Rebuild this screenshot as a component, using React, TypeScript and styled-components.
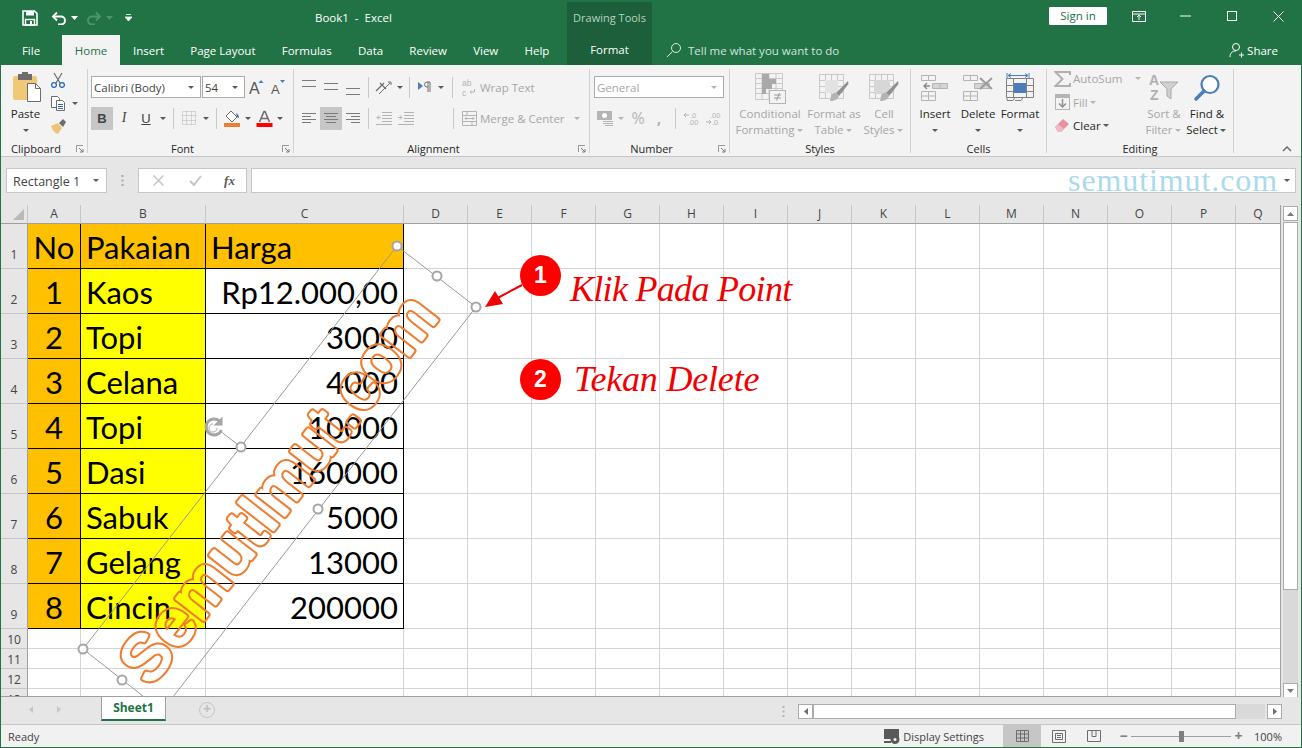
import React from "react";
import styled, { createGlobalStyle } from "styled-components";

const GlobalStyle = createGlobalStyle`
    html, body { margin: 0; padding: 0; background: #fff; }
    body { font-family: "Open Sans", "Liberation Sans", sans-serif; font-size: 11.5px; color: #262626; }
    * { box-sizing: border-box; }
`;

const GREEN = "#217346";
const DIM = "#b4b4b4";
const DIMTEXT = "#a6a6a6";
const BLUE = "#4a7ebb";

const Page = styled.div`
    width: 1302px;
    height: 748px;
    overflow: hidden;
`;

/* ---------- title bar ---------- */

const Header = styled.div`
    display: grid;
    grid-template-columns: 567px 85px 1fr;
    grid-template-rows: 35px 30px;
    height: 65px;
    background: ${GREEN};
    color: #fff;
`;

const QuickBar = styled.div`
    display: flex;
    align-items: center;
    padding-left: 19px;
`;

const QuickBtn = styled.span<{ $w: number; $ml?: number }>`
    width: ${p => p.$w}px;
    margin-left: ${p => p.$ml ?? 0}px;
    display: flex;
    justify-content: center;
    align-items: center;
    flex: none;
`;

const DocTitle = styled.div`
    margin-left: 172px;
    font-size: 11.5px;
    white-space: pre;
`;

const TabRow = styled.div`
    display: flex;
    align-items: stretch;
`;

const Tab = styled.div<{ $active?: boolean; $w?: number }>`
    ${p => (p.$w ? `width: ${p.$w}px; justify-content: center;` : "padding: 0 13.1px;")}
    display: flex;
    align-items: center;
    background: ${p => (p.$active ? "#f3f3f3" : "transparent")};
    color: ${p => (p.$active ? GREEN : "#fff")};
    white-space: nowrap;
`;

const ContextTab = styled.div`
    grid-column: 2;
    grid-row: 1 / 3;
    margin-top: 2px;
    background: #1c5f3a;
    display: flex;
    flex-direction: column;
    align-items: center;
`;

const ContextName = styled.div`
    height: 33px;
    line-height: 32px;
    font-size: 11px;
    color: #b5d3c1;
    white-space: nowrap;
`;

const ContextFormat = styled.div`
    height: 30px;
    line-height: 30px;
`;

const WindowBar = styled.div`
    display: flex;
    align-items: flex-start;
    justify-content: flex-end;
`;

const SignIn = styled.div`
    width: 58px;
    height: 18px;
    margin-top: 7px;
    background: #fff;
    color: ${GREEN};
    font-size: 11.5px;
    line-height: 18px;
    text-align: center;
    margin-right: 9px;
    border-radius: 1px;
`;

const WinBtn = styled.div`
    width: 46.5px;
    height: 32px;
    display: flex;
    align-items: center;
    justify-content: center;
`;

const TellRow = styled.div`
    display: flex;
    align-items: center;
    padding: 0 24px 0 14px;
`;

const TellText = styled.span`
    margin-left: 6px;
    color: #d3e4da;
    white-space: nowrap;
`;

const ShareBox = styled.div`
    margin-left: auto;
    display: flex;
    align-items: center;
    gap: 3px;
`;

/* ---------- body frame ---------- */

const Frame = styled.div`
    height: 683px;
    border: 1px solid ${GREEN};
    border-top: 0;
    display: flex;
    flex-direction: column;
`;

/* ---------- ribbon ---------- */

const Ribbon = styled.div`
    height: 92px;
    background: #f3f3f3;
    border-bottom: 1px solid #c6c6c6;
    display: flex;
    flex: none;
`;

const Group = styled.div<{ $w: number }>`
    width: ${p => p.$w}px;
    display: flex;
    flex-direction: column;
    position: relative;
    flex: none;
`;

const GroupBody = styled.div<{ $pl?: number }>`
    height: 74px;
    display: flex;
    padding-left: ${p => p.$pl ?? 0}px;
`;

const GroupLabel = styled.div<{ $launch?: boolean }>`
    height: 17px;
    line-height: 20px;
    text-align: center;
    font-size: 11px;
    color: #262626;
    padding-right: ${p => (p.$launch ? 16 : 0)}px;
`;

const Launcher = styled.svg`
    position: absolute;
    right: 3px;
    bottom: 3px;
`;

const VRule = styled.div`
    width: 1px;
    height: 84px;
    margin-top: 4px;
    background: #d0d0d0;
    flex: none;
`;

const Stack = styled.div`
    display: flex;
    flex-direction: column;
    padding-top: 11px;
    gap: 9px;
`;

const Row = styled.div`
    display: flex;
    align-items: center;
    height: 22px;
`;

const Btn = styled.div<{ $w?: number; $on?: boolean }>`
    width: ${p => p.$w ?? 22}px;
    height: 23px;
    display: flex;
    align-items: center;
    justify-content: center;
    flex: none;
    background: ${p => (p.$on ? "#c6c6c6" : "transparent")};
`;

const Caret = styled.span<{ $dim?: boolean; $w?: number }>`
    width: ${p => p.$w ?? 10}px;
    display: inline-flex;
    justify-content: center;
    flex: none;
    &::after {
        content: "";
        border-left: 3px solid transparent;
        border-right: 3px solid transparent;
        border-top: 3px solid ${p => (p.$dim ? DIM : "#595959")};
    }
`;

const Sep = styled.div<{ $ml?: number; $mr?: number }>`
    width: 1px;
    height: 21px;
    background: #c9c9c9;
    margin: 0 ${p => p.$mr ?? 4}px 0 ${p => p.$ml ?? 4}px;
    flex: none;
`;

const SelectBox = styled.div<{ $w: number; $dim?: boolean; $ml?: number }>`
    width: ${p => p.$w}px;
    height: 22px;
    margin-left: ${p => p.$ml ?? 0}px;
    background: #fff;
    border: 1px solid #ababab;
    display: flex;
    align-items: center;
    justify-content: space-between;
    padding: 0 4px 0 2px;
    color: ${p => (p.$dim ? DIMTEXT : "#444")};
    white-space: nowrap;
`;

const DimText = styled.span<{ $w?: number }>`
    color: ${DIMTEXT};
    white-space: nowrap;
    ${p => (p.$w ? `width: ${p.$w}px;` : "")}
`;

const LargeBtn = styled.div<{ $w: number; $dim?: boolean; $ml?: number }>`
    width: ${p => p.$w}px;
    margin-left: ${p => p.$ml ?? 0}px;
    flex: none;
    padding-top: 5px;
    display: flex;
    flex-direction: column;
    align-items: center;
    color: ${p => (p.$dim ? DIMTEXT : "#262626")};
`;

const LargeIcon = styled.div`
    height: 36px;
    display: flex;
    align-items: center;
    justify-content: center;
`;

const LargeLine = styled.div`
    height: 16px;
    line-height: 16px;
    white-space: nowrap;
    display: flex;
    align-items: center;
    justify-content: center;
`;

const SmallCol = styled.div<{ $pt?: number }>`
    display: flex;
    flex-direction: column;
    padding-top: ${p => p.$pt ?? 3}px;
`;

const SmallRow = styled.div`
    height: 23.5px;
    display: flex;
    align-items: center;
`;

const Collapse = styled.div`
    flex: 1;
    display: flex;
    align-items: flex-end;
    justify-content: flex-end;
    padding: 0 9px 4px 0;
`;

const BoldGlyph = styled.b`
    font-family: "Liberation Sans", sans-serif;
    font-size: 13px;
    color: #444;
`;

const ItalicGlyph = styled.i`
    font-family: "Liberation Serif", serif;
    font-size: 14px;
    color: #444;
`;

const UnderGlyph = styled.u`
    font-family: "Liberation Sans", sans-serif;
    font-size: 13px;
    color: #444;
`;

const NumberGlyph = styled.span<{ $bold?: boolean }>`
    color: ${DIM};
    font-size: 16px;
    font-weight: ${p => (p.$bold ? 700 : 400)};
`;

/* ---------- formula bar ---------- */

const FormulaBar = styled.div`
    height: 48px;
    flex: none;
    background: #e6e6e6;
    display: flex;
    padding: 11px 5px 0 5px;
`;

const FieldBox = styled.div<{ $w?: number }>`
    height: 25px;
    background: #fff;
    border: 1px solid #c6c6c6;
    display: flex;
    align-items: center;
    ${p => (p.$w ? `width: ${p.$w}px; flex: none;` : "flex: 1; margin-left: 4px;")}
`;

const NameText = styled.span`
    flex: 1;
    padding-left: 6px;
    padding-top: 1px;
    font-size: 12.5px;
    color: #444;
`;

const GripBox = styled.div`
    width: 31px;
    display: flex;
    justify-content: center;
    align-items: center;
    height: 25px;
`;

const FxGlyph = styled.i`
    font-family: "Liberation Serif", serif;
    font-size: 13px;
    font-weight: 700;
    color: #595959;
`;

const Watermark = styled.span`
    margin-left: auto;
    font-family: "Liberation Serif", serif;
    font-size: 32px;
    letter-spacing: 0.9px;
    line-height: 25px;
    color: #aadaeb;
`;

/* ---------- sheet ---------- */

const SheetWrap = styled.div`
    height: 492px;
    flex: none;
    display: flex;
    background: #e6e6e6;
`;

const SheetView = styled.div`
    width: 1280px;
    height: 492px;
    position: relative;
    overflow: hidden;
    background: #fff;
    border-right: 1px solid #9f9f9f;
    border-bottom: 1px solid #9f9f9f;
    flex: none;
`;

const CellGrid = styled.div`
    display: grid;
    grid-template-columns: 27px 53px 125px 198px repeat(13, 64px) 45px;
    grid-template-rows: 19px repeat(9, 45px) repeat(4, 20px);
`;

const Corner = styled.div`
    background: #e6e6e6;
    border-right: 1px solid #c6c6c6;
    border-bottom: 1px solid #9f9f9f;
    position: relative;
    &::after {
        content: "";
        position: absolute;
        right: 3px;
        bottom: 3px;
        border-left: 11px solid transparent;
        border-bottom: 11px solid #b9b9b9;
    }
`;

const ColHead = styled.div`
    background: #e6e6e6;
    border-right: 1px solid #c6c6c6;
    border-bottom: 1px solid #9f9f9f;
    text-align: center;
    line-height: 17px;
    font-size: 12px;
    color: #444;
`;

const RowHead = styled.div<{ $tall: boolean }>`
    background: #e6e6e6;
    border-right: 1px solid #9f9f9f;
    border-bottom: 1px solid #c6c6c6;
    display: flex;
    align-items: flex-end;
    justify-content: center;
    padding-bottom: ${p => (p.$tall ? 5 : 0)}px;
    font-size: 12px;
    line-height: 17px;
    color: #444;
`;

const Blank = styled.div`
    border-right: 1px solid #d4d4d4;
    border-bottom: 1px solid #d4d4d4;
`;

const DataCell = styled.div<{ $bg: string; $align: "left" | "center" | "right" }>`
    background: ${p => p.$bg};
    border-right: 1px solid #000;
    border-bottom: 1px solid #000;
    font-family: Lato, "Liberation Sans", sans-serif;
    font-size: 31px;
    line-height: 47px;
    color: #000;
    text-align: ${p => p.$align};
    padding: 0 5px;
    white-space: nowrap;
`;

const Overlay = styled.svg`
    position: absolute;
    left: 0;
    top: 0;
    pointer-events: none;
`;

const Badge = styled.div<{ $left: number; $top: number }>`
    position: absolute;
    left: ${p => p.$left}px;
    top: ${p => p.$top}px;
    width: 41px;
    height: 41px;
    border-radius: 50%;
    background: #ff0000;
    color: #fff;
    font-family: "Liberation Sans", sans-serif;
    font-weight: 700;
    font-size: 23px;
    line-height: 41px;
    text-align: center;
`;

const Note = styled.div<{ $left: number; $top: number; $ls: number }>`
    position: absolute;
    left: ${p => p.$left}px;
    top: ${p => p.$top}px;
    font-family: "Liberation Serif", serif;
    font-style: italic;
    font-size: 36px;
    line-height: 40px;
    letter-spacing: ${p => p.$ls}px;
    color: #f00000;
    white-space: nowrap;
`;

const VScroll = styled.div`
    flex: 1;
    display: flex;
    flex-direction: column;
    padding: 1px 3px 0 2px;
    height: 493px;
`;

const ScrollBtn = styled.div`
    width: 15px;
    height: 15px;
    background: #fff;
    border: 1px solid #ababab;
    display: flex;
    align-items: center;
    justify-content: center;
    flex: none;
`;

const VThumb = styled.div`
    height: 368px;
    margin-top: 1px;
    background: #fff;
    border: 1px solid #ababab;
    width: 15px;
`;

const VTrack = styled.div`
    width: 15px;
    height: 93px;
    background: #d9d9d9;
`;

/* ---------- sheet tabs ---------- */

const TabsBar = styled.div`
    height: 28px;
    flex: none;
    background: #e6e6e6;
    border-bottom: 1px solid #c6c6c6;
    display: flex;
    align-items: flex-start;
    padding-left: 16px;
`;

const NavArrow = styled.div`
    width: 28px;
    height: 24px;
    display: flex;
    align-items: center;
    justify-content: center;
`;

const SheetTab = styled.div`
    margin-left: 28px;
    width: 65px;
    height: 25px;
    background: #fff;
    border-left: 1px solid #9f9f9f;
    border-right: 1px solid #9f9f9f;
    border-bottom: 2px solid ${GREEN};
    color: ${GREEN};
    font-weight: 700;
    font-size: 12px;
    line-height: 23px;
    text-align: center;
    margin-top: -1px;
`;

const AddSheet = styled.div`
    margin-left: 33px;
    margin-top: 5px;
    width: 16px;
    height: 16px;
    border-radius: 50%;
    border: 1.5px solid #c6c6c6;
    color: #c0c0c0;
    font-size: 14px;
    font-weight: 700;
    line-height: 12px;
    text-align: center;
`;

const HScrollZone = styled.div`
    margin-left: auto;
    margin-right: 19px;
    margin-top: 7px;
    display: flex;
    align-items: center;
`;

const GripGap = styled.span`
    width: 13px;
`;

const HThumb = styled.div`
    width: 423px;
    height: 15px;
    background: #fff;
    border: 1px solid #ababab;
`;

const HTrack = styled.div`
    width: 29px;
    height: 15px;
    background: #d9d9d9;
    margin-right: 2px;
`;

/* ---------- status bar ---------- */

const StatusBar = styled.div`
    flex: 1;
    background: #f1f1f1;
    display: flex;
    align-items: center;
    padding: 0 19px 0 7px;
    font-size: 11px;
    color: #444;
`;

const StatusRight = styled.div`
    margin-left: auto;
    display: flex;
    align-items: center;
    height: 100%;
`;

const DisplaySettings = styled.div`
    display: flex;
    align-items: center;
    gap: 3px;
    margin-right: 19px;
`;

const ViewBtn = styled.div<{ $on?: boolean; $w: number }>`
    width: ${p => p.$w}px;
    height: 100%;
    background: ${p => (p.$on ? "#c6c6c6" : "transparent")};
    display: flex;
    align-items: center;
    justify-content: center;
`;

const ZoomLine = styled.div`
    width: 100px;
    height: 1px;
    margin: 0 3px;
    background: #9f9f9f;
    position: relative;
`;

const ZoomThumb = styled.div`
    position: absolute;
    left: 48px;
    top: -5px;
    width: 5px;
    height: 11px;
    background: #7f7f7f;
`;

const ZoomSign = styled.span<{ $ml?: number }>`
    width: 9px;
    margin-left: ${p => p.$ml ?? 0}px;
    text-align: center;
    font-size: 14px;
    font-weight: 700;
    line-height: 14px;
    color: #7f7f7f;
`;

const ZoomValue = styled.span`
    margin-left: 11px;
`;

/* ---------- icons ---------- */

const Ico = ({ w, h, children }: { w: number; h: number; children: React.ReactNode }) => (
    <svg width={w} height={h} viewBox={`0 0 ${w} ${h}`} fill="none">{children}</svg>
);

const LinesIcon = ({ rows }: { rows: [number, number, number][] }) => (
    <Ico w={16} h={16}>
        {rows.map(([x1, x2, y]) => <path key={y} d={`M${x1} ${y}.5H${x2}`} stroke="#7a7a7a" />)}
    </Ico>
);

const SaveIcon = () => (
    <Ico w={16} h={16}>
        <path d="M1 1h11.5L15 3.5V15H1z" stroke="#fff" strokeWidth="1.6" />
        <rect x="4" y="1" width="8" height="4.5" fill="#fff" />
        <rect x="3.5" y="9.5" width="9" height="5.5" stroke="#fff" strokeWidth="1.4" />
        <rect x="8" y="11" width="2" height="3" fill="#fff" />
    </Ico>
);

const UndoIcon = ({ color }: { color: string }) => (
    <Ico w={16} h={14}>
        <path d="M2 5.5h8a4 4 0 0 1 0 8H7" stroke={color} strokeWidth="1.9" />
        <path d="M6 1.5L2 5.5l4 4" stroke={color} strokeWidth="1.9" />
    </Ico>
);

const RedoIcon = ({ color }: { color: string }) => (
    <Ico w={16} h={14}>
        <path d="M14 5.5H6a4 4 0 0 0 0 8h3" stroke={color} strokeWidth="1.9" />
        <path d="M10 1.5l4 4-4 4" stroke={color} strokeWidth="1.9" />
    </Ico>
);

const MiniCaret = ({ color }: { color: string }) => (
    <Ico w={7} h={4}><path d="M0 0h7L3.5 4z" fill={color} /></Ico>
);

const MiniCaretUp = ({ color }: { color: string }) => (
    <Ico w={7} h={4}><path d="M0 4h7L3.5 0z" fill={color} /></Ico>
);

const PasteIcon = () => (
    <Ico w={33} h={32}>
        <g transform="translate(3 0)">
            <rect x="1" y="4" width="24" height="24" rx="2" fill="#f0c878" />
            <rect x="6" y="2" width="14" height="6" fill="#6d6d6d" />
            <rect x="10" y="0" width="6" height="3" fill="#6d6d6d" />
            <path d="M15.5 11.5h8l5 5v13h-13z" fill="#fff" stroke="#6d6d6d" />
            <path d="M23.5 11.5v5h5" stroke="#6d6d6d" />
        </g>
    </Ico>
);

const CutIcon = () => (
    <Ico w={16} h={16}>
        <path d="M4 1l6 10M12 1L6 11" stroke="#6d6d6d" strokeWidth="1.2" />
        <circle cx="4" cy="13" r="2.4" stroke="#2b6cb0" strokeWidth="1.3" />
        <circle cx="12" cy="13" r="2.4" stroke="#2b6cb0" strokeWidth="1.3" />
    </Ico>
);

const CopyIcon = () => (
    <Ico w={16} h={16}>
        <path d="M1.5 1.5h6l2 2v9h-8z" fill="#fff" stroke="#6d6d6d" />
        <path d="M6.5 5.5h6l2 2v8h-8z" fill="#fff" stroke="#6d6d6d" />
        <path d="M8 9.5h5M8 11.5h5M8 13.5h5" stroke="#2b6cb0" />
    </Ico>
);

const PainterIcon = () => (
    <Ico w={17} h={15}>
        <path d="M1 7l7-3 4 5-4 6c-3-1-6-4-7-8z" fill="#edc37a" />
        <path d="M9 4l4-4 3 3-3 5z" fill="#6d6d6d" />
    </Ico>
);

const GrowIcon = ({ small }: { small?: boolean }) => (
    <Ico w={15} h={20}>
        <text x="0" y="17" fontFamily="Liberation Sans" fontSize={small ? 13 : 16} fill="#555">A</text>
        <path d={small ? "M9 3h5l-2.500 3z" : "M9.500 6h5L12 3z"} fill={BLUE} />
    </Ico>
);

const BordersIcon = () => (
    <Ico w={14} h={14}>
        <path d="M.5 .5h13v13H.5zM4.500 .5v13M9.500 .5v13M.5 4.500h13M.5 9.500h13" stroke={DIM} strokeDasharray="1 1" />
    </Ico>
);

const FillIcon = () => (
    <Ico w={17} h={17}>
        <path d="M7 1l6 6-5 5-6-6z" fill="#fff" stroke="#6d6d6d" />
        <path d="M12 3c2 1 3 3 3 5l-2-1z" fill="#2b6cb0" />
        <rect x="0" y="13" width="16" height="4" fill="#ed7d31" />
    </Ico>
);

const FontColorIcon = () => (
    <Ico w={17} h={17}>
        <path d="M3.500 12L8 1.500h1L13.500 12M5.500 8.500h6" stroke="#6d6d6d" strokeWidth="1.6" />
        <rect x="0.500" y="13" width="16" height="4" fill="#ff0000" />
    </Ico>
);

const OrientIcon = () => (
    <Ico w={18} h={16}>
        <path d="M1 12l8-8M5 4l6 6" stroke="#6d6d6d" strokeWidth="1.2" />
        <path d="M4 15l11-11" stroke="#6d6d6d" />
        <path d="M13 3h3v3" stroke="#6d6d6d" />
    </Ico>
);

const LtrIcon = () => (
    <Ico w={14} h={12}>
        <path d="M0 1l5 4-5 4z" fill={BLUE} />
        <path d="M10 1v10M12 1v10M12 1H9a2.500 2.500 0 0 0 0 5h1" stroke="#6d6d6d" />
    </Ico>
);

const IndentIcon = ({ flip }: { flip?: boolean }) => (
    <Ico w={16} h={14}>
        <path d="M6 1.500h10M6 4.500h10M6 7.500h10M6 10.500h10M0 13.500h16" stroke={DIM} />
        <path d={flip ? "M0 6.500h4M2 4.500l2 2-2 2" : "M1 6.500h4M3 4.500l-2 2 2 2"} stroke={DIM} />
    </Ico>
);

const WrapIcon = () => (
    <Ico w={14} h={21}>
        <text x="0" y="9" fontFamily="Liberation Sans" fontSize="8.500" fill={DIM}>ab</text>
        <text x="0" y="18.500" fontFamily="Liberation Sans" fontSize="8.500" fill={DIM}>c</text>
        <path d="M12.500 12v3H8M9.500 13.500L8 15 9.500 16.500" stroke={DIM} />
    </Ico>
);

const MergeIcon = () => (
    <Ico w={15} h={15}>
        <path d="M.5 .5h14v14H.5zM.5 4.500h14M.5 10.500h14M5 .5v4M10 10.500v4" stroke={DIM} />
        <path d="M3 7.500h9M4.500 6L3 7.500 4.500 9M10.500 6L12 7.500 10.500 9" stroke={DIM} />
    </Ico>
);

const MoneyIcon = () => (
    <Ico w={17} h={17}>
        <rect x="0" y="1" width="15" height="9" fill={DIM} />
        <circle cx="7.500" cy="5.500" r="2.500" fill="#fff" />
        <path d="M6 11.500h10M6 13.500h10M8 15.500h8" stroke={DIM} />
    </Ico>
);

const DecimalIcon = ({ more }: { more?: boolean }) => (
    <Ico w={16} h={15}>
        <text x={more ? 6 : 4} y="6.500" fontFamily="Liberation Sans" fontSize="7.500" fill={DIM}>{more ? ".0" : ".00"}</text>
        <text x={more ? 4 : 6} y="14" fontFamily="Liberation Sans" fontSize="7.500" fill={DIM}>{more ? ".00" : ".0"}</text>
        <path d={more ? "M0 4h5M2 2L0 4l2 2" : "M0 11h5M3 9l2 2-2 2"} stroke={DIM} />
    </Ico>
);

const CondFormatIcon = () => (
    <Ico w={31} h={31}>
        <path d="M.5 .5h27v26H.5zM.5 5.500h27M.5 10.500h27M.5 15.500h27M.5 20.500h27M7 .5v26M14 .5v26M21 .5v26" stroke="#c9c9c9" />
        <rect x="7" y="1" width="7" height="5" fill="#a9a9a9" />
        <rect x="7" y="6" width="14" height="5" fill="#a9a9a9" />
        <rect x="7" y="11" width="10" height="5" fill="#a9a9a9" />
        <rect x="7" y="16" width="4" height="5" fill="#a9a9a9" />
        <rect x="14.500" y="17.500" width="16" height="13" fill="#f3f3f3" stroke="#b4b4b4" />
        <path d="M19 22h7M19 25h7M24.500 20l-3 7.500" stroke="#999" />
    </Ico>
);

const TableBrushIcon = ({ filled }: { filled?: boolean }) => (
    <Ico w={30} h={30}>
        <path d="M.5 1.500h24v24H.5zM.5 7.500h24M.5 13.500h24M.5 19.500h24M6.500 1.500v24M12.500 1.500v24M18.500 1.500v24" stroke="#c9c9c9" />
        {filled
            ? <rect x="5" y="7" width="16" height="14" fill="#d9d6d9" />
            : <rect x="6" y="7" width="13" height="13" fill="#e3e3e3" />}
        <path d="M29 8L17 20l3 3L29.500 11z" fill="#8f8f8f" />
        <path d="M12 23c1-3 4-4 6-3l2 3c-1 3-4 5-9 5z" fill="#b4b4b4" />
    </Ico>
);

const CellActionIcon = ({ cross }: { cross?: boolean }) => (
    <Ico w={cross ? 30 : 28} h={26}>
        <path d="M.5 .5h14v5H.5zM7.500 .5v5M.5 16.500h14v9H.5zM7.500 16.500v9M.5 21h14" stroke="#b4b4b4" />
        <path d="M11.500 8.500h15v5h-15zM19 8.500v5" stroke="#b4b4b4" fill="#d5d5d5" />
        {cross
            ? <path d="M17 3l12 11M29 3L17 14" stroke="#9c9c9c" strokeWidth="2" />
            : <path d="M3 11h6M6 8l-3 3 3 3" stroke="#8a8a8a" strokeWidth="1.4" />}
    </Ico>
);

const FormatCellsIcon = () => (
    <Ico w={28} h={32}>
        <path d="M1 1v5M23 1v5M2 3.500h20M2 3.500l3-2M2 3.500l3 2M22 3.500l-3-2M22 3.500l-3 2" stroke={BLUE} />
        <path d="M.5 6.500h27v19H.5zM7.500 6.500v19M20.500 6.500v19M.5 13.500h27M.5 19.500h27" stroke="#808080" />
        <rect x="8" y="11" width="12" height="10" fill={BLUE} />
        <path d="M1 25.500v3h6l2-3M9 28.500h6l2-3" stroke="#808080" />
    </Ico>
);

const SumIcon = () => (
    <Ico w={17} h={16}>
        <path d="M16 4V1H1.500l7 7-7 7H16v-3" stroke="#b0b0b0" strokeWidth="2" />
    </Ico>
);

const FillDownIcon = () => (
    <Ico w={15} h={16}>
        <rect x=".5" y=".5" width="14" height="15" fill="#f3f3f3" stroke={DIM} />
        <rect x="1" y="1" width="13" height="3" fill={DIM} />
        <path d="M7.500 5v8M4 9.500l3.500 3.500 3.500-3.500" stroke="#8f8f8f" strokeWidth="1.500" />
    </Ico>
);

const EraserIcon = () => (
    <Ico w={14} h={13}>
        <path d="M0 8l8-8 6 5-8 8H3z" fill="#e88fa0" />
        <path d="M0 8l3-3 6 5-3 3H3z" fill="#f1b9c4" />
    </Ico>
);

const SortIcon = () => (
    <Ico w={30} h={30}>
        <text x="0" y="12" fontFamily="Liberation Sans" fontWeight="700" fontSize="14" fill="#b0b0b0">A</text>
        <text x="1" y="27" fontFamily="Liberation Sans" fontWeight="700" fontSize="14" fill="#b0b0b0">Z</text>
        <path d="M11 9h18l-7 7v10l-4-3v-7z" fill="#d0d0d0" stroke="#a9a9a9" />
    </Ico>
);

const SearchIcon = () => (
    <Ico w={28} h={28}>
        <circle cx="17" cy="10.500" r="8.500" fill="#fff" stroke={BLUE} strokeWidth="2.200" />
        <path d="M11 17L3 25" stroke={BLUE} strokeWidth="3.500" strokeLinecap="round" />
    </Ico>
);

const RibbonGroup = ({ w, label, launch, pl, children }: {
    w: number, label: string, launch?: boolean, pl?: number, children: React.ReactNode,
}) => (
    <Group $w={w}>
        <GroupBody $pl={pl}>{children}</GroupBody>
        <GroupLabel $launch={launch}>{label}</GroupLabel>
        {launch && (
            <Launcher width={8} height={8} viewBox="0 0 8 8" fill="none">
                <path d="M.5 7V.5H7" stroke="#9a9a9a" />
                <path d="M3 3l4 4M4 7h3V4" stroke="#7d7d7d" />
            </Launcher>
        )}
    </Group>
);

/* ---------- data ---------- */

const TABS = ["Insert", "Page Layout", "Formulas", "Data", "Review", "View", "Help"];
const COLUMNS = "ABCDEFGHIJKLMNOPQ".split("");
const ITEMS = [
    ["No", "Pakaian", "Harga"],
    ["1", "Kaos", "Rp12.000,00"],
    ["2", "Topi", "3000"],
    ["3", "Celana", "4000"],
    ["4", "Topi", "10000"],
    ["5", "Dasi", "160000"],
    ["6", "Sabuk", "5000"],
    ["7", "Gelang", "13000"],
    ["8", "Cincin", "200000"],
];
const HANDLES = [
    [397, 246], [437, 276], [476, 307], [318, 509], [241, 447], [83, 649], [122, 680],
];

const WordArt = ({ fill, stroke }: { fill: string; stroke: number }) => (
    <text
        x="295"
        y="502"
        textAnchor="middle"
        transform="rotate(-52 295 502)"
        fontFamily="Liberation Sans"
        fontSize="64"
        textLength="470"
        lengthAdjust="spacing"
        fill={fill}
        stroke={fill}
        strokeWidth={stroke}
        strokeLinejoin="round"
    >SemutImut.com</text>
);

const App = () => {
    return (
        <Page>
            <GlobalStyle />
            <Header>
                <QuickBar>
                    <QuickBtn $w={22}><SaveIcon /></QuickBtn>
                    <QuickBtn $w={22} $ml={7}><UndoIcon color="#fff" /></QuickBtn>
                    <QuickBtn $w={8}><MiniCaret color="#fff" /></QuickBtn>
                    <QuickBtn $w={22} $ml={5}><RedoIcon color="#4f9470" /></QuickBtn>
                    <QuickBtn $w={8}><MiniCaret color="#4f9470" /></QuickBtn>
                    <QuickBtn $w={30}>
                        <Ico w={7} h={7}><path d="M1 .5h5M0 3h7L3.500 7z" stroke="#fff" fill="#fff" strokeWidth=".8" /></Ico>
                    </QuickBtn>
                    <DocTitle>Book1  -  Excel</DocTitle>
                </QuickBar>
                <ContextTab>
                    <ContextName>Drawing Tools</ContextName>
                    <ContextFormat>Format</ContextFormat>
                </ContextTab>
                <WindowBar>
                    <SignIn>Sign in</SignIn>
                    <WinBtn>
                        <Ico w={14} h={11}>
                            <path d="M.5 .5h13v10H.5zM.5 3h13M7 9V4.500M5 6l2-2 2 2" stroke="#fff" />
                        </Ico>
                    </WinBtn>
                    <WinBtn><Ico w={11} h={2}><path d="M0 1h11" stroke="#fff" /></Ico></WinBtn>
                    <WinBtn><Ico w={10} h={10}><rect x=".5" y=".5" width="9" height="9" stroke="#fff" /></Ico></WinBtn>
                    <WinBtn><Ico w={11} h={11}><path d="M.5 .5l10 10M10.500 .5l-10 10" stroke="#fff" /></Ico></WinBtn>
                </WindowBar>
                <TabRow>
                    <Tab $w={62}>File</Tab>
                    <Tab $w={58} $active>Home</Tab>
                    {TABS.map(name => <Tab key={name}>{name}</Tab>)}
                </TabRow>
                <TellRow>
                    <Ico w={16} h={16}>
                        <circle cx="10" cy="6" r="4.500" stroke="#dbe8e0" />
                        <path d="M6.500 9.500L1 15" stroke="#dbe8e0" />
                    </Ico>
                    <TellText>Tell me what you want to do</TellText>
                    <ShareBox>
                        <Ico w={15} h={16}>
                            <circle cx="7" cy="5" r="3.500" stroke="#fff" />
                            <path d="M1 15c0-4 2-6 6-6M10 13h5M12.500 10.500v5" stroke="#fff" />
                        </Ico>
                        Share
                    </ShareBox>
                </TellRow>
            </Header>

            <Frame>
                <Ribbon>
                    <RibbonGroup w={86} label="Clipboard" launch>
                        <LargeBtn $w={49}>
                            <LargeIcon><PasteIcon /></LargeIcon>
                            <LargeLine>Paste</LargeLine>
                            <LargeLine><Caret /></LargeLine>
                        </LargeBtn>
                        <SmallCol>
                            <SmallRow><CutIcon /></SmallRow>
                            <SmallRow><CopyIcon /><Caret $w={17} /></SmallRow>
                            <SmallRow><PainterIcon /></SmallRow>
                        </SmallCol>
                    </RibbonGroup>
                    <VRule />
                    <RibbonGroup w={205} label="Font" launch pl={3}>
                        <Stack>
                            <Row>
                                <SelectBox $w={110}>Calibri (Body)<Caret /></SelectBox>
                                <SelectBox $w={43} $ml={1}>54<Caret /></SelectBox>
                                <Btn><GrowIcon /></Btn>
                                <Btn><GrowIcon small /></Btn>
                            </Row>
                            <Row>
                                <Btn $on><BoldGlyph>B</BoldGlyph></Btn>
                                <Btn><ItalicGlyph>I</ItalicGlyph></Btn>
                                <Btn><UnderGlyph>U</UnderGlyph></Btn>
                                <Caret $w={12} />
                                <Sep />
                                <Btn><BordersIcon /></Btn>
                                <Caret $w={12} />
                                <Sep />
                                <Btn><FillIcon /></Btn>
                                <Caret />
                                <Btn><FontColorIcon /></Btn>
                                <Caret />
                            </Row>
                        </Stack>
                    </RibbonGroup>
                    <VRule />
                    <RibbonGroup w={295} label="Alignment" launch pl={4}>
                        <Stack>
                            <Row>
                                <Btn><LinesIcon rows={[[1, 15, 1], [1, 15, 7]]} /></Btn>
                                <Btn><LinesIcon rows={[[1, 15, 4], [1, 15, 10]]} /></Btn>
                                <Btn><LinesIcon rows={[[1, 15, 9], [1, 15, 15]]} /></Btn>
                                <Sep />
                                <Btn><OrientIcon /></Btn>
                                <Caret />
                                <Sep />
                                <Btn><LtrIcon /></Btn>
                                <Caret />
                                <Sep $ml={6} />
                                <Btn $w={23}><WrapIcon /></Btn>
                                <DimText>Wrap Text</DimText>
                            </Row>
                            <Row>
                                <Btn><LinesIcon rows={[[1, 15, 3], [1, 10, 6], [1, 15, 9], [1, 10, 12]]} /></Btn>
                                <Btn $on><LinesIcon rows={[[1, 15, 3], [3, 13, 6], [1, 15, 9], [3, 13, 12]]} /></Btn>
                                <Btn><LinesIcon rows={[[1, 15, 3], [6, 15, 6], [1, 15, 9], [6, 15, 12]]} /></Btn>
                                <Sep />
                                <Btn><IndentIcon /></Btn>
                                <Btn><IndentIcon flip /></Btn>
                                <Sep $ml={36} />
                                <Btn $w={22}><MergeIcon /></Btn>
                                <DimText>Merge &amp; Center</DimText>
                                <Caret $dim $w={24} />
                            </Row>
                        </Stack>
                    </RibbonGroup>
                    <VRule />
                    <RibbonGroup w={139} label="Number" launch pl={4}>
                        <Stack>
                            <Row><SelectBox $w={130} $dim>General<Caret $dim /></SelectBox></Row>
                            <Row>
                                <Btn><MoneyIcon /></Btn>
                                <Caret $dim />
                                <Btn $w={24}><NumberGlyph>%</NumberGlyph></Btn>
                                <Btn $w={18}><NumberGlyph $bold>,</NumberGlyph></Btn>
                                <Sep $ml={7} $mr={5} />
                                <Btn><DecimalIcon more /></Btn>
                                <Btn><DecimalIcon /></Btn>
                            </Row>
                        </Stack>
                    </RibbonGroup>
                    <VRule />
                    <RibbonGroup w={180} label="Styles">
                        <LargeBtn $w={80} $dim>
                            <LargeIcon><CondFormatIcon /></LargeIcon>
                            <LargeLine>Conditional</LargeLine>
                            <LargeLine>Formatting<Caret $dim /></LargeLine>
                        </LargeBtn>
                        <LargeBtn $w={48} $dim>
                            <LargeIcon><TableBrushIcon /></LargeIcon>
                            <LargeLine>Format as</LargeLine>
                            <LargeLine>Table<Caret $dim /></LargeLine>
                        </LargeBtn>
                        <LargeBtn $w={52} $dim>
                            <LargeIcon><TableBrushIcon filled /></LargeIcon>
                            <LargeLine>Cell</LargeLine>
                            <LargeLine>Styles<Caret $dim /></LargeLine>
                        </LargeBtn>
                    </RibbonGroup>
                    <VRule />
                    <RibbonGroup w={135} label="Cells">
                        <LargeBtn $w={48}>
                            <LargeIcon><CellActionIcon /></LargeIcon>
                            <LargeLine>Insert</LargeLine>
                            <LargeLine><Caret /></LargeLine>
                        </LargeBtn>
                        <LargeBtn $w={38}>
                            <LargeIcon><CellActionIcon cross /></LargeIcon>
                            <LargeLine>Delete</LargeLine>
                            <LargeLine><Caret /></LargeLine>
                        </LargeBtn>
                        <LargeBtn $w={46}>
                            <LargeIcon><FormatCellsIcon /></LargeIcon>
                            <LargeLine>Format</LargeLine>
                            <LargeLine><Caret /></LargeLine>
                        </LargeBtn>
                    </RibbonGroup>
                    <VRule />
                    <RibbonGroup w={186} label="Editing" pl={4}>
                        <SmallCol $pt={2}>
                            <SmallRow><Btn><SumIcon /></Btn><DimText $w={60}>AutoSum</DimText><Caret $dim /></SmallRow>
                            <SmallRow><Btn><FillDownIcon /></Btn><DimText>Fill</DimText><Caret $dim /></SmallRow>
                            <SmallRow><Btn><EraserIcon /></Btn>Clear<Caret /></SmallRow>
                        </SmallCol>
                        <LargeBtn $w={44} $dim $ml={-1}>
                            <LargeIcon><SortIcon /></LargeIcon>
                            <LargeLine>Sort &amp;</LargeLine>
                            <LargeLine>Filter<Caret $dim /></LargeLine>
                        </LargeBtn>
                        <LargeBtn $w={42}>
                            <LargeIcon><SearchIcon /></LargeIcon>
                            <LargeLine>Find &amp;</LargeLine>
                            <LargeLine>Select<Caret /></LargeLine>
                        </LargeBtn>
                    </RibbonGroup>
                    <VRule />
                    <Collapse>
                        <Ico w={10} h={6}><path d="M1 5l4-4 4 4" stroke="#6d6d6d" strokeWidth="1.500" /></Ico>
                    </Collapse>
                </Ribbon>

                <FormulaBar>
                    <FieldBox $w={101}>
                        <NameText>Rectangle 1</NameText>
                        <Caret $w={20} />
                    </FieldBox>
                    <GripBox>
                        <Ico w={3} h={11}><path d="M1.500 0v2M1.500 4.500v2M1.500 9v2" stroke="#a6a6a6" strokeWidth="2" /></Ico>
                    </GripBox>
                    <FieldBox $w={109}>
                        <Btn $w={38}><Ico w={11} h={11}><path d="M.5 .5l10 10M10.500 .5l-10 10" stroke="#c6c6c6" strokeWidth="1.500" /></Ico></Btn>
                        <Btn $w={36}><Ico w={13} h={11}><path d="M1 6l4 4 7-9" stroke="#c6c6c6" strokeWidth="2" /></Ico></Btn>
                        <Btn $w={33}><FxGlyph>fx</FxGlyph></Btn>
                    </FieldBox>
                    <FieldBox>
                        <Watermark>semutimut.com</Watermark>
                        <Caret $w={17} />
                    </FieldBox>
                </FormulaBar>

                <SheetWrap>
                    <SheetView>
                        <CellGrid>
                            <Corner />
                            {COLUMNS.map(c => <ColHead key={c}>{c}</ColHead>)}
                            {Array.from({ length: 13 }, (_, r) => (
                                <React.Fragment key={r}>
                                    <RowHead $tall={r < 9}>{r + 1}</RowHead>
                                    {COLUMNS.map((c, i) => {
                                        const value = ITEMS[r]?.[i];
                                        if (value === undefined) return <Blank key={c} />;
                                        const bg = i === 0 || r === 0 ? "#ffc000" : i === 1 ? "#ffff00" : "#fff";
                                        const align = i === 0 ? "center" : i === 2 && r > 0 ? "right" : "left";
                                        return <DataCell key={c} $bg={bg} $align={align}>{value}</DataCell>;
                                    })}
                                </React.Fragment>
                            ))}
                        </CellGrid>

                        <Overlay width={1280} height={492} viewBox="1 205 1280 492" fill="none">
                            <defs>
                                <mask id="wordart" maskUnits="userSpaceOnUse" x="1" y="205" width="1280" height="492">
                                    <WordArt fill="#fff" stroke={7} />
                                    <WordArt fill="#000" stroke={3} />
                                </mask>
                            </defs>
                            <path d="M397 246L476 307 162 711 83 649z" stroke="#999" />
                            <path d="M241 447L220 431" stroke="#999" />
                            <rect x="1" y="205" width="1280" height="492" fill="#ed7d31" mask="url(#wordart)" />
                            {HANDLES.map(([x, y]) => (
                                <circle key={x} cx={x} cy={y} r="4.500" fill="#fff" stroke="#a6a6a6" strokeWidth="2" />
                            ))}
                            <path d="M219.500 421a8 8 0 1 0 2 9" stroke="#a6a6a6" strokeWidth="3" />
                            <path d="M222.500 416.500v9h-9z" fill="#a6a6a6" />
                            <path d="M213 424a4 4 0 1 0 4 4" stroke="#c6c6c6" strokeWidth="1.500" />
                            <path d="M522 285L492 301" stroke="#f00000" strokeWidth="2" />
                            <path d="M485 307L503 304 495 291z" fill="#f00000" />
                        </Overlay>

                        <Badge $left={519} $top={50}>1</Badge>
                        <Note $left={569} $top={64} $ls={-0.7}>Klik Pada Point</Note>
                        <Badge $left={519} $top={154}>2</Badge>
                        <Note $left={573} $top={154} $ls={-0.2}>Tekan Delete</Note>
                    </SheetView>
                    <VScroll>
                        <ScrollBtn><MiniCaretUp color="#7a7a7a" /></ScrollBtn>
                        <VThumb />
                        <VTrack />
                        <ScrollBtn><MiniCaret color="#7a7a7a" /></ScrollBtn>
                    </VScroll>
                </SheetWrap>

                <TabsBar>
                    <NavArrow><Ico w={4} h={7}><path d="M4 0v7L0 3.500z" fill="#c6c6c6" /></Ico></NavArrow>
                    <NavArrow><Ico w={4} h={7}><path d="M0 0v7l4-3.500z" fill="#c6c6c6" /></Ico></NavArrow>
                    <SheetTab>Sheet1</SheetTab>
                    <AddSheet>+</AddSheet>
                    <HScrollZone>
                        <Ico w={3} h={11}><path d="M1.500 0v2M1.500 4.500v2M1.500 9v2" stroke="#b4b4b4" strokeWidth="2" /></Ico>
                        <GripGap />
                        <ScrollBtn><Ico w={4} h={7}><path d="M4 0v7L0 3.500z" fill="#6d6d6d" /></Ico></ScrollBtn>
                        <HThumb />
                        <HTrack />
                        <ScrollBtn><Ico w={4} h={7}><path d="M0 0v7l4-3.500z" fill="#6d6d6d" /></Ico></ScrollBtn>
                    </HScrollZone>
                </TabsBar>

                <StatusBar>
                    Ready
                    <StatusRight>
                        <DisplaySettings>
                            <Ico w={16} h={15}>
                                <rect x="0" y="0" width="15" height="10" fill="#595959" />
                                <path d="M0 13h7" stroke="#595959" strokeWidth="2" />
                                <circle cx="11" cy="10.500" r="4.500" fill="#595959" />
                                <circle cx="11" cy="10.500" r="1.500" fill="#f1f1f1" />
                            </Ico>
                            Display Settings
                        </DisplaySettings>
                        <ViewBtn $on $w={38}>
                            <Ico w={13} h={12}>
                                <path d="M.5 .5h12v11H.5zM.5 4h12M.5 8h12M4.500 .5v11M8.500 .5v11" stroke="#6d6d6d" />
                            </Ico>
                        </ViewBtn>
                        <ViewBtn $w={36}>
                            <Ico w={14} h={13}>
                                <path d="M.5 .5h13v12H.5zM3.500 3.500h7v6h-7zM5 5.500h4M5 7.500h4" stroke="#6d6d6d" />
                            </Ico>
                        </ViewBtn>
                        <ViewBtn $w={34}>
                            <Ico w={14} h={12}>
                                <path d="M.5 .5h13v11H.5zM5 .5v6h4V.5" stroke="#6d6d6d" />
                            </Ico>
                        </ViewBtn>
                        <ZoomSign $ml={8}>−</ZoomSign>
                        <ZoomLine><ZoomThumb /></ZoomLine>
                        <ZoomSign>+</ZoomSign>
                        <ZoomValue>100%</ZoomValue>
                    </StatusRight>
                </StatusBar>
            </Frame>
        </Page>
    );
};

export default App;
